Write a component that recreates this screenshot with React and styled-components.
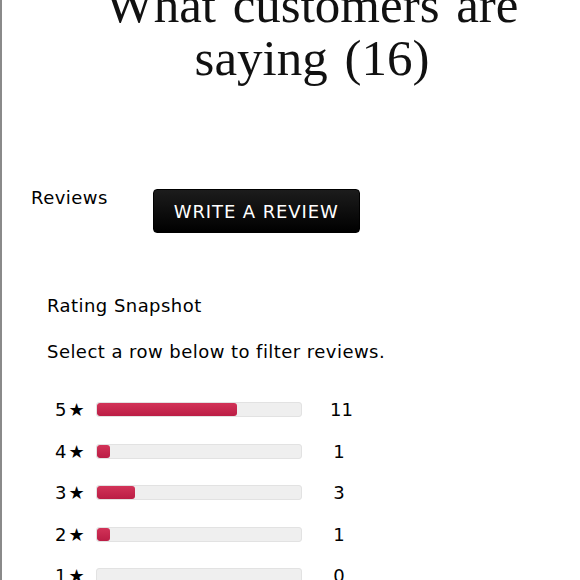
import React from "react";
import styled, { createGlobalStyle } from "styled-components";

const Global = createGlobalStyle`
  html, body { margin: 0; padding: 0; background: #fff; }
  body { width: 580px; height: 580px; overflow: hidden; }
  #root { height: 580px; }
`;

const Page = styled.div`
  height: 580px;
  border-left: 2px solid #8a8a8a;
  box-sizing: border-box;
  overflow: hidden;
  font-family: "DejaVu Sans", "Open Sans", sans-serif;
  color: #000;
`;

const Title = styled.h1`
  margin: -21px 0 0 0;
  padding-left: 42px;
  font-family: "Liberation Serif", serif;
  font-weight: 400;
  font-size: 51px;
  word-spacing: 4px;
  line-height: 53px;
  text-align: center;
  color: #111;
`;

const ReviewsBar = styled.div`
  display: flex;
  align-items: flex-start;
  margin-top: 103px;
  padding-left: 29px;
  gap: 45px;
`;

const ReviewsLabel = styled.div`
  font-size: 18px;
  letter-spacing: 0.45px;
  line-height: 20px;
`;

const WriteButton = styled.button`
  margin-top: 1px;
  width: 207px;
  height: 44px;
  border: 1px solid #000;
  border-radius: 4px;
  background: linear-gradient(#1c1c1c, #000);
  color: #fff;
  font-family: "DejaVu Sans", sans-serif;
  font-size: 18px;
  letter-spacing: 0.9px;
  padding: 0;
  cursor: pointer;
`;

const Snapshot = styled.div`
  padding-left: 45px;
  margin-top: 63px;
`;

const SectionTitle = styled.div`
  font-size: 18px;
  letter-spacing: 0.45px;
  line-height: 20px;
`;

const Hint = styled.div`
  margin-top: 26px;
  font-size: 18px;
  letter-spacing: 0.45px;
  line-height: 20px;
`;

const Rows = styled.div`
  margin-top: 37px;
  display: flex;
  flex-direction: column;
  gap: 21.6px;
`;

const Row = styled.div`
  display: grid;
  grid-template-columns: 49px 206px 46px;
  align-items: center;
  height: 20px;
`;

const Stars = styled.div`
  padding-left: 8px;
  font-size: 18px;
  display: flex;
  align-items: center;
  gap: 2px;
`;

const Track = styled.div`
  height: 15px;
  background: #efefef;
  border: 1px solid #e2e2e2;
  border-radius: 3px;
  box-sizing: border-box;
  overflow: hidden;
  display: flex;
`;

const Fill = styled.div`
  height: 100%;
  min-width: 12px;
  background: linear-gradient(#d23358, #bb1d45);
  border-radius: 3px;
`;

const Count = styled.div`
  font-size: 18px;
  width: 18px;
  justify-self: end;
  text-align: center;
`;

const data = [
  { star: 5, count: 11 },
  { star: 4, count: 1 },
  { star: 3, count: 3 },
  { star: 2, count: 1 },
  { star: 1, count: 0 },
];

export default function App() {
  return (
    <>
      <Global />
      <Page>
        <Title>
          What customers are
          <br />
          saying (16)
        </Title>
        <ReviewsBar>
          <ReviewsLabel>Reviews</ReviewsLabel>
          <WriteButton>WRITE A REVIEW</WriteButton>
        </ReviewsBar>
        <Snapshot>
          <SectionTitle>Rating Snapshot</SectionTitle>
          <Hint>Select a row below to filter reviews.</Hint>
          <Rows>
            {data.map((d) => (
              <Row key={d.star}>
                <Stars>
                  {d.star}
                  <span>★</span>
                </Stars>
                <Track>
                  {d.count > 0 && <Fill style={{ width: `${(d.count / 16) * 100}%` }} />}
                </Track>
                <Count>{d.count}</Count>
              </Row>
            ))}
          </Rows>
        </Snapshot>
      </Page>
    </>
  );
}
